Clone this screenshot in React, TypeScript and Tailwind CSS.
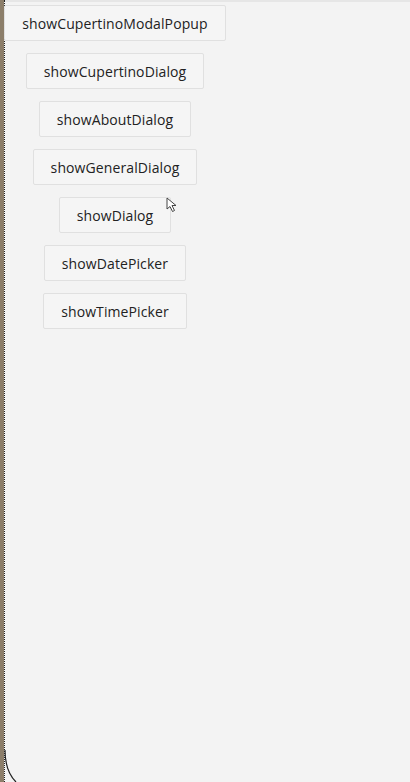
import React from "react";

const items = [
  "showCupertinoModalPopup",
  "showCupertinoDialog",
  "showAboutDialog",
  "showGeneralDialog",
  "showDialog",
  "showDatePicker",
  "showTimePicker",
];

export default function App() {
  return (
    <div
      className="relative flex h-[782px] w-[410px] overflow-hidden bg-[#f3f3f3]"
      style={{ fontFamily: '"Open Sans", "Liberation Sans", sans-serif' }}
    >
      <div className="w-[4px] shrink-0 bg-[#8c7e6a]" />
      <div className="w-[1px] shrink-0 border-l border-dotted border-[#222]" />
      <div className="flex-1 border-t-2 border-[#e6e6e6]">
        <div className="flex w-[220px] flex-col items-center gap-[12px] pt-[3px]">
          {items.map((t) => (
            <button
              key={t}
              className="h-[36px] rounded-[2px] border border-[#e0e0e0] bg-[#f5f5f5] px-[17px] text-[14px] tracking-[0.1px] text-[#222]"
            >
              {t}
            </button>
          ))}
        </div>
      </div>
      <svg
        className="absolute left-[4px] top-[750px]"
        width="14"
        height="32"
        viewBox="0 0 14 32"
      >
        <path d="M1 0 C1 14 4 24 12 32" stroke="#222" strokeWidth="1.2" fill="none" />
      </svg>
      <svg
        className="absolute left-[166px] top-[197px]"
        width="12"
        height="16"
        viewBox="0 0 12 16"
      >
        <path d="M1 1 L1 12 L4 9.5 L6.5 14.5 L8.5 13.5 L6 8.5 L10 8.5 Z" fill="#fff" stroke="#444" strokeWidth="1" />
      </svg>
    </div>
  );
}
